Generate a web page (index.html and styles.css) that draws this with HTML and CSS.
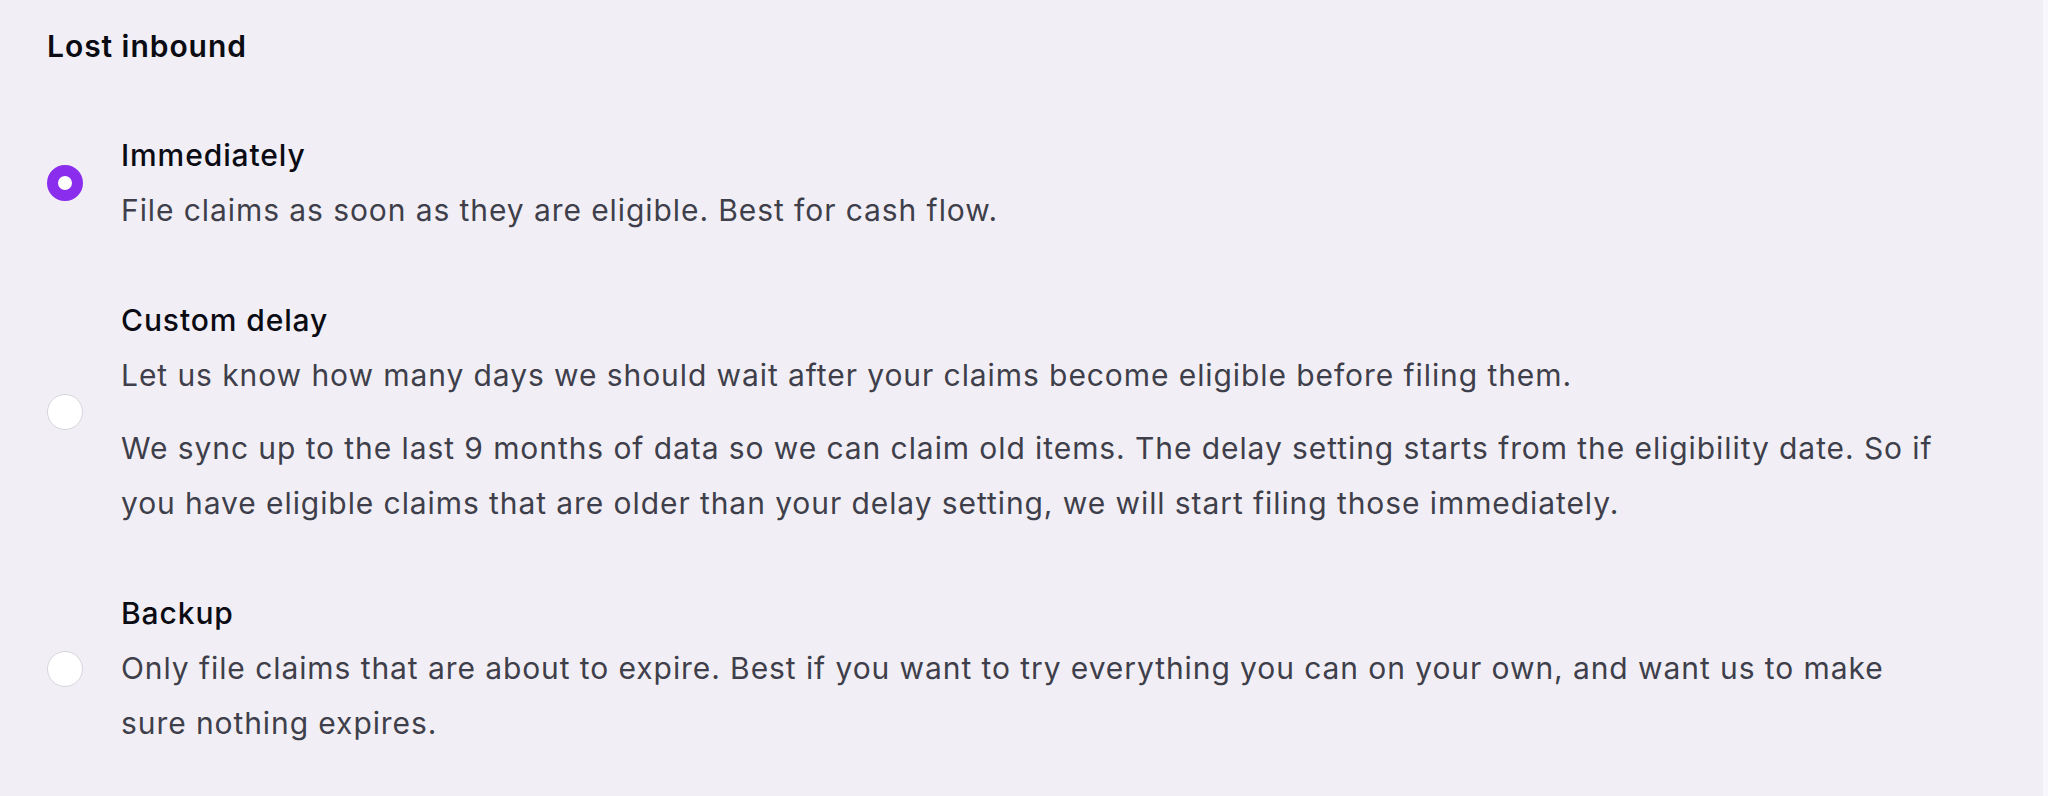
FILE: index.html
```html
<!DOCTYPE html>
<html lang="en">
<head>
<meta charset="utf-8">
<title>Lost inbound</title>
<link rel="stylesheet" href="styles.css">
</head>
<body>
<div class="page">
  <main class="panel">
    <h2 class="section-title">Lost inbound</h2>
    <div class="options" role="radiogroup">
      <label class="option">
        <span class="radio radio-checked"></span>
        <span class="option-text">
          <span class="option-title">Immediately</span>
          <span class="option-desc">File claims as soon as they are eligible. Best for cash flow.</span>
        </span>
      </label>
      <label class="option">
        <span class="radio"></span>
        <span class="option-text">
          <span class="option-title">Custom delay</span>
          <span class="option-desc">Let us know how many days we should wait after your claims become eligible before filing them.</span>
          <span class="option-desc option-desc-extra">We sync up to the last 9 months of data so we can claim old items. The delay setting starts from the eligibility date. So if you have eligible claims that are older than your delay setting, we will start filing those immediately.</span>
        </span>
      </label>
      <label class="option">
        <span class="radio"></span>
        <span class="option-text">
          <span class="option-title">Backup</span>
          <span class="option-desc">Only file claims that are about to expire. Best if you want to try everything you can on your own, and want us to make sure nothing expires.</span>
        </span>
      </label>
    </div>
  </main>
  <div class="scroll-edge"></div>
</div>
</body>
</html>
```

FILE: styles.css
```css
* {
  box-sizing: border-box;
}

html, body {
  margin: 0;
  padding: 0;
  height: 100%;
}

body {
  background: #f1eff5;
  font-family: Inter, "Noto Sans", "Liberation Sans", sans-serif;
  color: #0b0b14;
}

.page {
  display: flex;
  min-height: 796px;
}

.panel {
  flex: 1;
  padding: 19px 0 0 47px;
}

.scroll-edge {
  width: 5px;
  background: #f8f7fb;
}

.section-title {
  margin: 0;
  font-size: 30px;
  line-height: 55px;
  font-weight: 600;
  letter-spacing: 0.95px;
  color: #0b0b14;
}

.options {
  display: flex;
  flex-direction: column;
  gap: 55px;
  margin-top: 54px;
}

.option {
  display: flex;
  align-items: center;
  gap: 38px;
  cursor: pointer;
}

.radio {
  flex: none;
  width: 36px;
  height: 36px;
  border-radius: 50%;
  background: #ffffff;
  border: 1.5px solid #d6d5dc;
}

.radio-checked {
  border: 11px solid #8a2ded;
  background: #ffffff;
}

.option-text {
  display: flex;
  flex-direction: column;
  max-width: 1826px;
}

.option-title {
  font-size: 30px;
  line-height: 55px;
  font-weight: 500;
  letter-spacing: 0.9px;
  color: #0b0b14;
}

.option-desc {
  font-size: 30px;
  line-height: 55px;
  font-weight: 400;
  letter-spacing: 0.92px;
  color: #3f3f4b;
}

.option-desc-extra {
  margin-top: 18px;
}
```
